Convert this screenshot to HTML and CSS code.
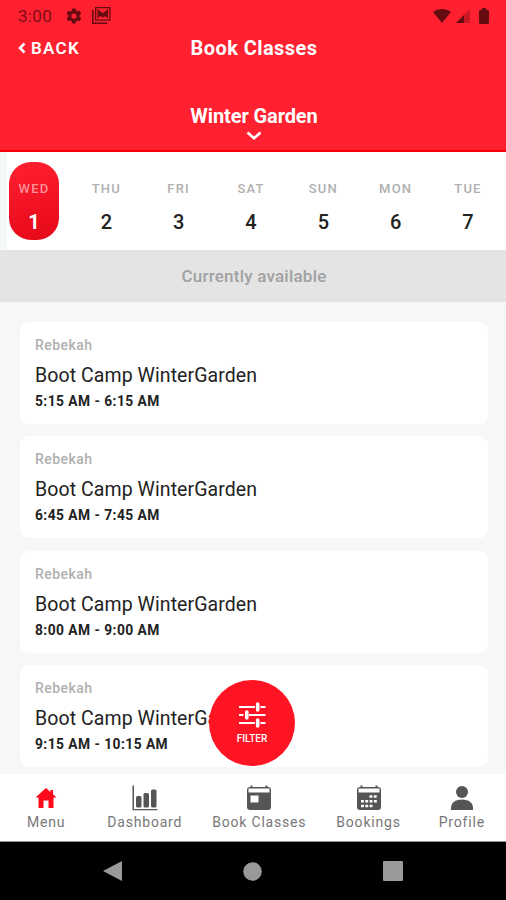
FILE: index.html
```html
<!DOCTYPE html>
<html lang="en">
<head>
    <meta charset="UTF-8">
    <meta name="viewport" content="width=device-width, initial-scale=1.0">
    <title>Book Classes</title>
    <link rel="stylesheet" href="styles.css">
</head>
<body>

<header class="header">
    <div class="status-bar">
        <span class="clock">3:00</span>
        <svg width="18" height="18" viewBox="0 0 24 24"><path fill-rule="evenodd" d="M19.4 13a7.500 7.500 0 0 0 0-2l2.100-1.650a.5.5 0 0 0 .12-.64l-2-3.460a.5.500 0 0 0-.61-.22l-2.490 1a7.300 7.300 0 0 0-1.690-.98l-.38-2.650A.5.500 0 0 0 14 2h-4a.5.500 0 0 0-.49.420l-.38 2.650c-.61.250-1.170.590-1.690.980l-2.490-1a.5.500 0 0 0-.61.220l-2 3.460a.5.500 0 0 0 .12.640L4.570 11a8 8 0 0 0 0 2l-2.110 1.650a.5.500 0 0 0-.12.640l2 3.460c.12.220.390.300.610.220l2.490-1c.52.400 1.080.730 1.690.980l.38 2.650c.3.240.240.420.490.420h4c.25 0 .46-.18.490-.42l.38-2.650a7.300 7.300 0 0 0 1.690-.98l2.490 1c.23.090.490 0 .61-.22l2-3.460a.5.500 0 0 0-.12-.64zM12 15.500a3.500 3.500 0 1 1 0-7 3.500 3.500 0 0 1 0 7z"/></svg>
        <svg class="status-mail" width="19" height="17" viewBox="0 0 19 17"><path d="M0 3h1.600v12.400H15.500V17H0z"/><path fill-rule="evenodd" d="M3 0h15.500v13.700H3zM4.300 1.300v11.100h12.900V1.300z"/><path d="M5.500 11.500V2l5.250 4.200L16 2v9.500l-2.600-2.400-2.650 1.400L8 9z"/></svg>
        <span class="spacer"></span>
        <svg width="18" height="14" viewBox="0 0 18 14"><path d="M0 3C5-1 13-1 18 3L9 14z"/></svg>
        <svg class="status-signal" width="14" height="14" viewBox="0 0 14 14"><path opacity=".35" d="M14 0v14H0z"/><path d="M8 6v8H0z"/></svg>
        <svg class="status-battery" width="10" height="16" viewBox="0 0 10 16"><path d="M3 0h4v1.700h1.500q1.500 0 1.500 1.500v11.300q0 1.500-1.500 1.500h-7Q0 16 0 14.500V3.200q0-1.500 1.500-1.500H3z"/></svg>
    </div>
    <div class="title-bar">
        <a class="back">
            <svg width="8" height="12" viewBox="0 0 8 12"><path d="M6.500 1.500L2 6l4.500 4.500"/></svg>
            <span>BACK</span>
        </a>
        <h1>Book Classes</h1>
    </div>
    <div class="location">
        <span>Winter Garden</span>
        <svg width="16" height="9" viewBox="0 0 16 9"><path d="M1.500 1.500L8 7.200l6.500-5.700"/></svg>
    </div>
</header>

<div class="days">
    <div class="day selected"><span>WED</span><b>1</b></div>
    <div class="day"><span>THU</span><b>2</b></div>
    <div class="day"><span>FRI</span><b>3</b></div>
    <div class="day"><span>SAT</span><b>4</b></div>
    <div class="day"><span>SUN</span><b>5</b></div>
    <div class="day"><span>MON</span><b>6</b></div>
    <div class="day"><span>TUE</span><b>7</b></div>
</div>

<div class="available">Currently available</div>

<main class="classes">
    <div class="card">
        <div class="coach">Rebekah</div>
        <div class="name">Boot Camp WinterGarden</div>
        <div class="time">5:15 AM - 6:15 AM</div>
    </div>
    <div class="card">
        <div class="coach">Rebekah</div>
        <div class="name">Boot Camp WinterGarden</div>
        <div class="time">6:45 AM - 7:45 AM</div>
    </div>
    <div class="card">
        <div class="coach">Rebekah</div>
        <div class="name">Boot Camp WinterGarden</div>
        <div class="time">8:00 AM - 9:00 AM</div>
    </div>
    <div class="card">
        <div class="coach">Rebekah</div>
        <div class="name">Boot Camp WinterGarden</div>
        <div class="time">9:15 AM - 10:15 AM</div>
    </div>

    <!-- Floating filter button -->
    <button class="filter">
        <svg width="28" height="28" viewBox="0 0 28 28"><path d="M1 6h16M22.500 6H27.500M1 14h4.500M11 14h16.500M1 22h16M22.500 22H27.500" stroke-width="2"/><path d="M19.700 3v6M8.800 11v6M19.700 19v6" stroke-width="3.600" stroke-linecap="round"/></svg>
        <span>FILTER</span>
    </button>
</main>

<nav class="tabs">
    <a class="tab tab-menu active">
        <svg width="26" height="28" viewBox="0 0 26 28"><path d="M13 4L2.500 13.500H5.500V24H10.500V16.500H15.500V24H20.500V13.500H23.500L20 10.300V6H17.500V8z"/></svg>
        <span>Menu</span>
    </a>
    <a class="tab tab-dashboard">
        <svg width="26" height="28" viewBox="0 0 26 28"><path d="M.5 1.500H2V25H25.500V26.300H.5z"/><rect x="4" y="12" width="5.500" height="11.500" rx="1.500"/><rect x="11.500" y="9" width="5.500" height="14.500" rx="1.500"/><rect x="19" y="5.500" width="5.500" height="18" rx="1.500"/></svg>
        <span>Dashboard</span>
    </a>
    <a class="tab tab-classes">
        <svg width="26" height="28" viewBox="0 0 26 28"><rect x="1" y="3" width="24" height="23" rx="3"/><path d="M5.500 1.500v2M20.500 1.500v2" stroke="#555" stroke-width="2"/><path fill="#fff" d="M2.500 4.500h21v4h-21zM4.500 11.500h8v7h-8z"/></svg>
        <span>Book Classes</span>
    </a>
    <a class="tab tab-bookings">
        <svg width="26" height="28" viewBox="0 0 26 28"><rect x="1" y="3" width="24" height="23" rx="3"/><path d="M5.500 1.500v2M20.500 1.500v2" stroke="#555" stroke-width="2"/><path fill="#fff" d="M2.500 4.500h21v4h-21z"/><path d="M13.500 12.500h8M5 17.200h17M5 22h12" stroke="#fff" stroke-width="2.600" stroke-dasharray="2.900 1.400"/></svg>
        <span>Bookings</span>
    </a>
    <a class="tab tab-profile">
        <svg width="26" height="28" viewBox="0 0 26 28"><circle cx="13" cy="8" r="6"/><path d="M2 26v-2c0-5 4-8.500 11-8.500S24 19 24 24v2z"/></svg>
        <span>Profile</span>
    </a>
</nav>

<footer class="system-nav">
    <svg width="19" height="22" viewBox="0 0 19 22"><path d="M19 1v20L0 11z"/></svg>
    <svg width="19" height="19" viewBox="0 0 19 19"><circle cx="9.500" cy="9.500" r="9.300"/></svg>
    <svg width="20" height="20" viewBox="0 0 20 20"><rect width="20" height="20" rx="1"/></svg>
</footer>

</body>
</html>
```

FILE: styles.css
```css
* {
    box-sizing: border-box;
}
body {
    margin: 0;
    width: 506px;
    height: 900px;
    overflow: hidden;
    display: flex;
    flex-direction: column;
    font-family: Roboto, sans-serif;
    background: #f6f7f9;
}
svg {
    display: block;
    flex: none;
}
.header {
    height: 152px;
    flex: none;
    background: #ff2030;
    border-bottom: 2px solid #f5000c;
    color: #fff;
}
.status-bar {
    height: 31px;
    padding: 0 17px 0 18px;
    display: flex;
    align-items: center;
    color: #7c0c16;
    fill: #650b12;
}
.clock {
    font-size: 17px;
    letter-spacing: 0.3px;
    width: 47px;
}
.status-mail {
    margin-left: 9px;
}
.spacer {
    flex: 1;
}
.status-signal {
    margin-left: 5px;
}
.status-battery {
    margin-left: 9px;
}
.title-bar {
    height: 33px;
    display: grid;
    grid-template-columns: 1fr auto 1fr;
    align-items: center;
    padding-left: 18px;
    padding-right: 16px;
}
.title-bar svg,
.location svg {
    fill: none;
    stroke: #fff;
    stroke-width: 2.6;
}
.back {
    display: flex;
    align-items: center;
    gap: 5px;
    font-size: 17px;
    font-weight: 600;
    letter-spacing: 1.3px;
}
h1 {
    margin: 0;
    font-size: 20px;
    font-weight: 700;
    letter-spacing: 0.45px;
}
.location {
    padding: 41px 0 0 2px;
    display: flex;
    flex-direction: column;
    align-items: center;
    gap: 3px;
    font-size: 20px;
    line-height: 23px;
    font-weight: 700;
    letter-spacing: -0.1px;
}
.days {
    height: 98px;
    flex: none;
    display: flex;
    justify-content: space-between;
    padding: 10px 13px 0 9px;
    background: linear-gradient(90deg, #f6f9fa 7px, #fff 7px);
}
.day {
    width: 50px;
    height: 78px;
    padding-top: 18px;
    display: flex;
    flex-direction: column;
    align-items: center;
    color: #222;
}
.day span {
    font-size: 13px;
    line-height: 18px;
    font-weight: 500;
    letter-spacing: 1.2px;
    color: #b0b0b0;
}
.day b {
    margin-top: 12px;
    font-size: 20px;
    line-height: 24px;
    font-weight: 500;
}
.selected {
    border-radius: 22px;
    background: linear-gradient(165deg, #ff2030, #e50819);
    color: #fff;
}
.selected span {
    color: #ff9298;
}
.selected b {
    font-weight: 700;
}
.available {
    height: 52px;
    flex: none;
    background: #e4e4e4;
    color: #a1a1a1;
    text-align: center;
    font-size: 17px;
    line-height: 53px;
    font-weight: 500;
    letter-spacing: 0.22px;
    padding-left: 2px;
}
.classes {
    position: relative;
    height: 472px;
    flex: none;
    padding: 20px 18px 0 20px;
    display: flex;
    flex-direction: column;
    gap: 12.4px;
}
.card {
    height: 102px;
    flex: none;
    padding: 14px 15px;
    border-radius: 9px;
    background: #fff;
}
.coach {
    font-size: 14px;
    line-height: 18px;
    font-weight: 500;
    letter-spacing: 0.45px;
    color: #b0b0b0;
}
.name {
    margin-top: 10px;
    font-size: 19.5px;
    line-height: 24px;
    font-weight: 400;
    letter-spacing: 0.08px;
    color: #222;
}
.time {
    margin-top: 4px;
    font-size: 13.8px;
    line-height: 18px;
    font-weight: 700;
    letter-spacing: 0.45px;
    color: #222;
}
.filter {
    position: absolute;
    left: 209px;
    top: 378px;
    width: 86px;
    height: 86px;
    padding: 0;
    border: none;
    border-radius: 50%;
    background: #ff1424;
    color: #fff;
    display: flex;
    flex-direction: column;
    align-items: center;
    justify-content: center;
    gap: 4px;
    font-family: inherit;
    font-size: 10px;
    line-height: 12px;
    font-weight: 500;
}
.filter svg {
    stroke: #fff;
    fill: none;
}
.tabs {
    height: 68px;
    flex: none;
    display: flex;
    padding: 10px 0 0 27px;
    background: #fff;
    border-bottom: 1px solid #999;
}
.tab {
    display: flex;
    flex-direction: column;
    align-items: center;
    gap: 1px;
    font-size: 14px;
    line-height: 18px;
    letter-spacing: 0.8px;
    white-space: nowrap;
    color: #777;
    fill: #555;
}
.tab-dashboard {
    margin-left: 42px;
}
.tab-classes {
    margin-left: 30px;
}
.tab-bookings {
    margin-left: 30px;
}
.tab-profile {
    margin-left: 38px;
}
.active {
    fill: #ff0a1a;
}
.system-nav {
    height: 58px;
    flex: none;
    display: flex;
    align-items: center;
    justify-content: space-between;
    padding: 0 103px;
    background: #000;
    fill: #999;
}
```
